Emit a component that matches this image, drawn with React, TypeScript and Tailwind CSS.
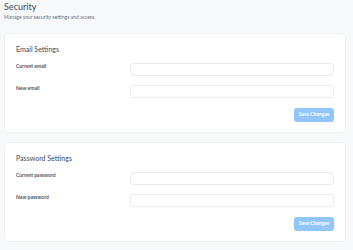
import React from "react";

function Field({ label }: { label: string }) {
  return (
    <div className="flex items-start">
      <div className="w-[114px] shrink-0 text-[5px] leading-[6px] font-bold text-[#4b5563]">{label}</div>
      <div className="h-[13px] flex-1 rounded-[3px] border border-[#e8eaee] bg-white" />
    </div>
  );
}

function Card({ title, fields }: { title: string; fields: string[] }) {
  return (
    <div className="rounded-[4px] border border-[#eef0f3] bg-white px-[11px] pt-[11px] pb-[10px]">
      <div className="text-[7px] leading-[8px] font-medium text-[#4b5563]">{title}</div>
      <div className="mt-[10px] flex flex-col gap-[9px]">
        {fields.map((f) => (
          <Field key={f} label={f} />
        ))}
      </div>
      <div className="mt-[10px] flex justify-end">
        <button className="h-[14px] w-[40px] rounded-[3px] bg-[#93c5fd] text-[5px] font-bold text-white">Save Changes</button>
      </div>
    </div>
  );
}

export default function App() {
  return (
    <div className="min-h-[250px] w-[353px] bg-[#f7f8fa] pl-[4px] pr-[7px] font-['Lato',sans-serif]">
      <h1 className="pt-[1px] text-[9px] leading-[12px] font-medium text-[#4b5563]">Security</h1>
      <p className="mt-[1px] text-[5px] leading-[6px] text-[#6b7280]">Manage your security settings and access.</p>
      <div className="mt-[13px] flex flex-col gap-[9px]">
        <Card title="Email Settings" fields={["Current email", "New email"]} />
        <Card title="Password Settings" fields={["Current password", "New password"]} />
      </div>
    </div>
  );
}
